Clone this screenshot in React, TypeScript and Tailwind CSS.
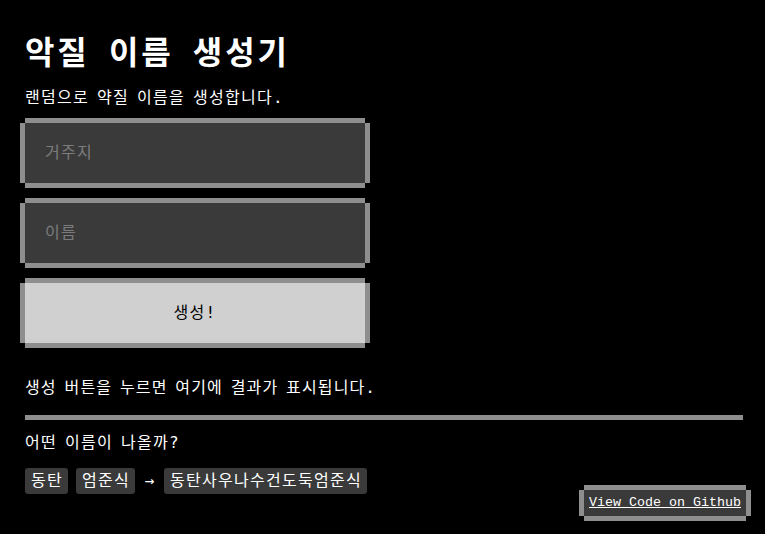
import React from "react";

const font = {
  fontFamily: '"DejaVu Sans Mono", "Noto Sans CJK KR", monospace',
};

function PixelBox({
  children,
  className = "",
}: {
  children: React.ReactNode;
  className?: string;
}) {
  return (
    <div
      className={`shadow-[5px_0_0_0_#8e8e8e,-5px_0_0_0_#8e8e8e,0_5px_0_0_#8e8e8e,0_-5px_0_0_#8e8e8e] ${className}`}
    >
      {children}
    </div>
  );
}

function Tag({ children }: { children: React.ReactNode }) {
  return (
    <span className="h-[26px] pl-[6px] pr-[5px] flex items-center rounded-[3px] bg-[#3a3a3a] text-white text-[16px]">
      {children}
    </span>
  );
}

export default function App() {
  return (
    <div
      className="min-h-screen bg-black text-white pl-[25px] pr-[22px] pt-[33px] relative tracking-[0.08em] [word-spacing:-0.18em]"
      style={font}
    >
      <h1 className="text-[32px] leading-[40px] font-bold tracking-[0.09em]">
        악질 이름 생성기
      </h1>
      <p className="mt-[13px] text-[16px] leading-[24px]">
        랜덤으로 약질 이름을 생성합니다.
      </p>

      <div className="mt-[13px] flex flex-col gap-5 w-[340px]">
        <PixelBox className="h-[60px] bg-[#3a3a3a] flex items-center px-5">
          <span className="text-[16px] text-[#7c7c7c]">거주지</span>
        </PixelBox>
        <PixelBox className="h-[60px] bg-[#3a3a3a] flex items-center px-5">
          <span className="text-[16px] text-[#7c7c7c]">이름</span>
        </PixelBox>
        <PixelBox className="h-[60px] bg-[#d0d0d0] flex items-center justify-center">
          <span className="text-[16px] text-black">생성!</span>
        </PixelBox>
      </div>

      <p className="mt-[33px] text-[16px] leading-[24px] tracking-[0.07em]">
        생성 버튼을 누르면 여기에 결과가 표시됩니다.
      </p>
      <div className="mt-[15px] h-[5px] bg-[#8e8e8e]" />

      <p className="mt-[11px] text-[16px] leading-[24px]">어떤 이름이 나올까?</p>
      <div className="mt-[13px] flex items-center gap-2">
        <Tag>동탄</Tag>
        <Tag>엄준식</Tag>
        <span className="w-[13px] text-center text-[16px] tracking-normal">→</span>
        <Tag>동탄사우나수건도둑엄준식</Tag>
      </div>

      <PixelBox className="absolute right-[19px] bottom-[18px] h-[26px] w-[162px] bg-[#3a3a3a] flex items-center justify-center">
        <a
          href="#"
          className="text-[13.33px] text-white underline tracking-normal [word-spacing:normal]"
          style={{ fontFamily: '"Liberation Mono", monospace' }}
        >
          View Code on Github
        </a>
      </PixelBox>
    </div>
  );
}
